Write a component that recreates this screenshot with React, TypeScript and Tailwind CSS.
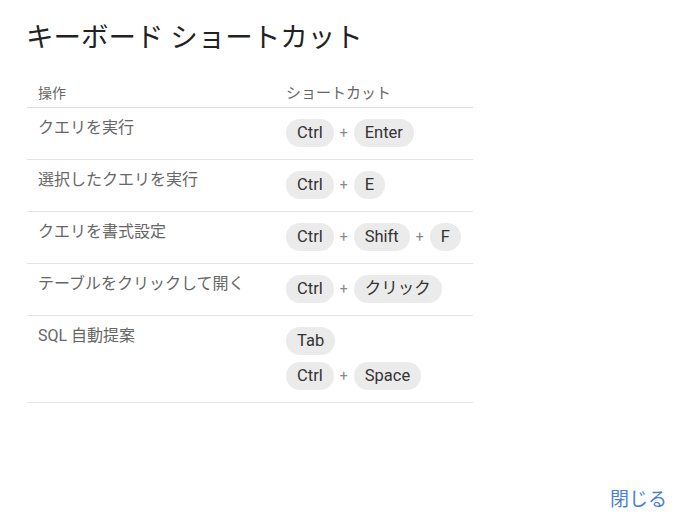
import React from "react";

const font = { fontFamily: "Roboto, 'Noto Sans CJK JP', sans-serif" };

function Key({ k }: { k: string }) {
  return (
    <span className="inline-flex h-[28px] items-center rounded-full bg-[#ebebeb] px-[11px] text-[16.5px] text-[#333]">
      {k}
    </span>
  );
}

function Combo({ keys }: { keys: string[] }) {
  return (
    <div className="flex items-center">
      {keys.map((k, i) => (
        <React.Fragment key={i}>
          {i > 0 && <span className="mx-[6px] text-[14px] text-[#888]">+</span>}
          <Key k={k} />
        </React.Fragment>
      ))}
    </div>
  );
}

const rows: { label: string; combos: string[][] }[] = [
  { label: "クエリを実行", combos: [["Ctrl", "Enter"]] },
  { label: "選択したクエリを実行", combos: [["Ctrl", "E"]] },
  { label: "クエリを書式設定", combos: [["Ctrl", "Shift", "F"]] },
  { label: "テーブルをクリックして開く", combos: [["Ctrl", "クリック"]] },
  { label: "SQL 自動提案", combos: [["Tab"], ["Ctrl", "Space"]] },
];

export default function App() {
  return (
    <div className="relative h-[523px] w-[686px] bg-white" style={font}>
      <div className="px-[26px] pt-[21px]">
        <h1 className="text-[27.5px] leading-[34px] font-normal text-[#222]">キーボード ショートカット</h1>
        <div className="mt-[25px] ml-[1px] w-[446px]">
          <div className="flex h-[28px] items-center border-b border-[#dadce0] text-[14px] text-[#666]">
            <div className="w-[248px] pl-[11px]">操作</div>
            <div className="pl-[11px] text-[15px]">ショートカット</div>
          </div>
          {rows.map((r, i) => (
            <div key={i} className="flex border-b border-[#e4e4e4]">
              <div className="w-[248px] pl-[11px] pt-[10px] text-[16px] leading-[20px] text-[#666]">{r.label}</div>
              <div className="flex flex-col gap-[7px] pl-[11px] pt-[11px] pb-[12px]">
                {r.combos.map((c, j) => (
                  <Combo key={j} keys={c} />
                ))}
              </div>
            </div>
          ))}
        </div>
      </div>
      <button className="absolute right-[19px] bottom-[9px] text-[19px] text-[#4a7fd9]">閉じる</button>
    </div>
  );
}
